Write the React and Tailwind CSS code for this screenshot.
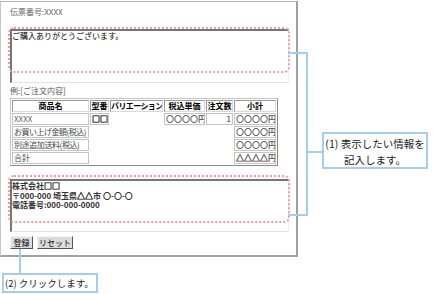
import React from "react";

const cols = "grid grid-cols-[77px_19px_53px_41px_27px_42px] gap-px";

// thin geometric glyphs get a light stroke so they read as dark as in the shot
const G = ({ children }) => (
  <span className="[-webkit-text-stroke:0.5px_currentColor]">{children}</span>
);

const Cell = ({ children, className = "" }) => (
  <div className={"h-[12px] border border-[#c4c4c4] bg-white px-px leading-[10px] whitespace-nowrap overflow-hidden " + className}>
    {children}
  </div>
);

const Head = ({ children, className = "" }) => (
  <div className={"h-[12px] border border-t-[#9a9a9a] border-l-[#9a9a9a] border-r-[#d8d8d8] border-b-[#d8d8d8] bg-white text-center font-bold leading-[10px] text-black whitespace-nowrap overflow-hidden " + className}>
    {children}
  </div>
);

const Blank = () => <div className="h-[12px]" />;

export default function App() {
  return (
    <div className="relative w-[433px] h-[294px] overflow-hidden bg-white font-['Noto_Sans_CJK_JP',sans-serif] text-[8px] text-black">
      {/* form frame */}
      <div className="mt-px w-[298px] h-[256px] border-t border-l border-r-2 border-b-2 border-t-[#b0b0b0] border-l-[#c8c8c8] border-r-[#a0a0a0] border-b-[#a0a0a0] pl-[9px] pt-[4px]">
        <div className="leading-[12px] text-[#666]">伝票番号:XXXX</div>

        {/* message textarea */}
        <div className="relative mt-[11px] w-[279px] h-[54px] border-t-2 border-l-2 border-r border-b border-t-[#767676] border-l-[#767676] border-r-[#eeeeee] border-b-[#e2e2e2] leading-[9px]">
          ご購入ありがとうございます。
          <div className="absolute -left-[4px] -top-[4px] w-[282px] h-[46px] border-2 border-dotted border-[#f39a9a] rounded-[6px]" />
        </div>

        <div className="mt-[2px] leading-[12px] text-[#555]">例:[ご注文内容]</div>

        {/* order table */}
        <div className="mt-px w-[268px] border border-t-[#c8c8c8] border-l-[#c8c8c8] border-r-[#8a8a8a] border-b-[#8a8a8a] p-px">
          <div className={cols}>
            <Head>商品名</Head>
            <Head>型番</Head>
            <Head className="tracking-[-0.6px]">バリエーション</Head>
            <Head>税込単価</Head>
            <Head>注文数</Head>
            <Head>小計</Head>
          </div>
          <div className={cols + " mt-px text-[#666]"}>
            <Cell>XXXX</Cell>
            <Cell className="text-[#222]"><G>□□</G></Cell>
            <Blank />
            <Cell className="font-bold">〇〇〇〇円</Cell>
            <Cell className="text-right text-[#333]">1</Cell>
            <Cell className="font-bold">〇〇〇〇円</Cell>
          </div>
          <div className={cols + " mt-px text-[#444]"}>
            <Cell className="tracking-[-0.5px]">お買い上げ金額(税込)</Cell>
            <Blank />
            <Blank />
            <Blank />
            <Blank />
            <Cell className="font-bold text-[#666]">〇〇〇〇円</Cell>
          </div>
          <div className={cols + " mt-px text-[#444]"}>
            <Cell className="tracking-[-0.4px]">別途追加送料(税込)</Cell>
            <Blank />
            <Blank />
            <Blank />
            <Blank />
            <Cell className="font-bold text-[#666]">〇〇〇〇円</Cell>
          </div>
          <div className={cols + " mt-px text-[#444]"}>
            <Cell>合計</Cell>
            <Blank />
            <Blank />
            <Blank />
            <Blank />
            <Cell className="font-bold text-[#666]"><G>△△△△</G>円</Cell>
          </div>
        </div>

        {/* shop info textarea */}
        <div className="relative mt-[13px] w-[279px] h-[53px] border-t-2 border-l-2 border-r border-b border-t-[#767676] border-l-[#767676] border-r-[#eeeeee] border-b-[#e2e2e2] leading-[9.5px] font-bold text-[#333]">
          <div>株式会社<G>□□</G></div>
          <div>〒000-000 埼玉県<G>△△</G>市 〇-〇-〇</div>
          <div>電話番号:000-000-0000</div>
          <div className="absolute -left-[4px] -top-[6px] w-[282px] h-[48px] border-2 border-dotted border-[#f39a9a] rounded-[6px]" />
        </div>

        {/* buttons */}
        <div className="mt-[4px] flex gap-[4px]">
          <button className="w-[23px] h-[13px] bg-[#dcdcdc] border border-t-[#f4f4f4] border-l-[#f4f4f4] border-r-[#555] border-b-[#555] text-[8px] leading-[10px]">
            登録
          </button>
          <button className="w-[36px] h-[13px] bg-[#dcdcdc] border border-t-[#f4f4f4] border-l-[#f4f4f4] border-r-[#555] border-b-[#555] text-[8px] leading-[10px]">
            リセット
          </button>
        </div>
      </div>

      {/* callout (1) bracket */}
      <div className="absolute left-[288px] top-[52px] w-[20px] h-[2px] bg-[#a3cdf5]" />
      <div className="absolute left-[306px] top-[52px] w-[2px] h-[164px] bg-[#a3cdf5]" />
      <div className="absolute left-[288px] top-[214px] w-[20px] h-[2px] bg-[#a3cdf5]" />
      <div className="absolute left-[308px] top-[151px] w-[14px] h-[2px] bg-[#a3cdf5]" />
      <div className="absolute left-[322px] top-[132px] w-[106px] h-[37px] border-2 border-[#a3cdf5] bg-white pt-[2px] text-center text-[10.5px] leading-[16px] text-[#222] whitespace-nowrap">
        <div>(1) 表示したい情報を</div>
        <div>記入します。</div>
      </div>

      {/* callout (2) */}
      <div className="absolute left-[19px] top-[249px] w-[2px] h-[24px] bg-[#a3cdf5]" />
      <div className="absolute left-[2px] top-[273px] w-[96px] h-[20px] border-2 border-[#a3cdf5] bg-white pl-px text-[9.5px] leading-[16px] text-[#222] whitespace-nowrap">
        (2) クリックします。
      </div>
    </div>
  );
}
